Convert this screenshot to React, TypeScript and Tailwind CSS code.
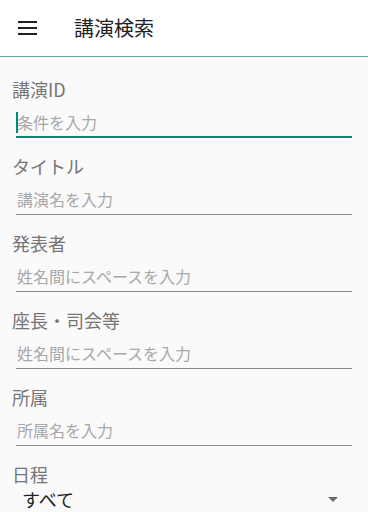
const fields = [
  { label: "講演ID", placeholder: "条件を入力", focused: true },
  { label: "タイトル", placeholder: "講演名を入力" },
  { label: "発表者", placeholder: "姓名間にスペースを入力" },
  { label: "座長・司会等", placeholder: "姓名間にスペースを入力" },
  { label: "所属", placeholder: "所属名を入力" },
];

const font = { fontFamily: '"Noto Sans CJK JP", "Noto Sans", sans-serif' };

export default function App() {
  return (
    <div className="w-[368px] h-[512px] overflow-hidden bg-[#fafafa]" style={font}>
      {/* App bar */}
      <header className="h-[57px] bg-white border-b border-[#5aaeb0] flex items-center">
        <button className="ml-[18px] w-[19px] flex flex-col gap-[4px]">
          <span className="block h-[2px] bg-[#212121]" />
          <span className="block h-[2px] bg-[#212121]" />
          <span className="block h-[2px] bg-[#212121]" />
        </button>
        <h1 className="ml-[37px] text-[20px] text-[#212121] leading-none">講演検索</h1>
      </header>

      <div className="pt-[20px]">
        {fields.map((f) => (
          <div key={f.label} className="mb-[16px]">
            <div className="pl-[12px] text-[18px] leading-[24px] text-[#757575]">{f.label}</div>
            <div
              className={
                "relative mt-[6px] mx-[16px] " +
                (f.focused ? "border-b-2 border-[#00897b]" : "border-b border-[#8a8a8a]")
              }
            >
              <input
                className={
                  "w-full bg-transparent outline-none pl-[1px] text-[16px] text-[#212121] placeholder:text-[#a8a8a8] " +
                  (f.focused ? "h-[29px]" : "h-[30px]")
                }
                placeholder={f.placeholder}
              />
              {f.focused && <span className="absolute left-0 top-[5px] w-[2px] h-[21px] bg-[#00897b]" />}
            </div>
          </div>
        ))}

        {/* Schedule select */}
        <div className="pl-[12px] text-[18px] leading-[24px] text-[#757575]">日程</div>
        <div className="flex items-center justify-between pl-[22px] pr-[30px] h-[26px]">
          <span className="text-[18px] text-[#212121]">すべて</span>
          <span className="w-0 h-0 border-l-[5px] border-r-[5px] border-t-[5px] border-l-transparent border-r-transparent border-t-[#6b6b6b]" />
        </div>
      </div>
    </div>
  );
}
